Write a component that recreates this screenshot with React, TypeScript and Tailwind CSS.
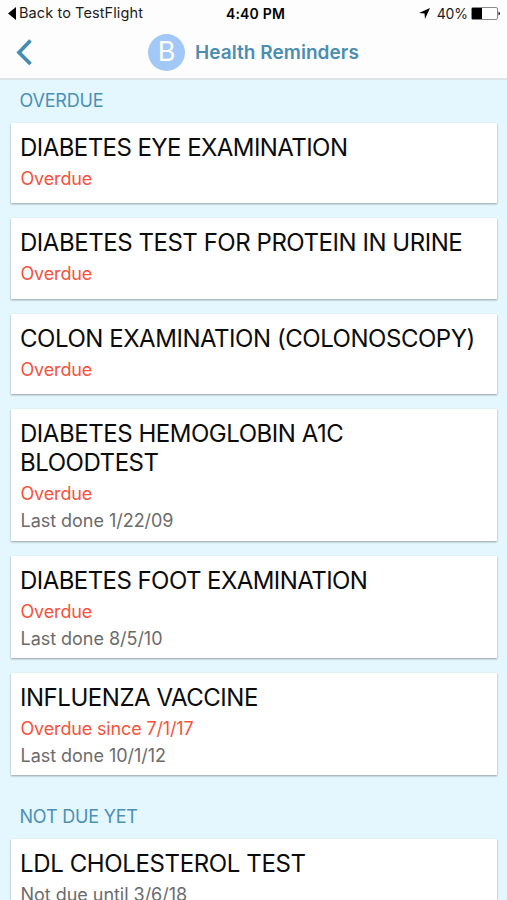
type Reminder = { title: string; status?: string; note?: string; size: string; tracking?: string };

const overdue: Reminder[] = [
  { title: 'DIABETES EYE EXAMINATION', status: 'Overdue', size: 'h-[80.4px]', tracking: 'tracking-[-0.56px]' },
  { title: 'DIABETES TEST FOR PROTEIN IN URINE', status: 'Overdue', size: 'h-[80.4px]' },
  { title: 'COLON EXAMINATION (COLONOSCOPY)', status: 'Overdue', size: 'h-[80.4px]' },
  { title: 'DIABETES HEMOGLOBIN A1C BLOODTEST', status: 'Overdue', note: 'Last done 1/22/09', size: 'h-[132px]' },
  { title: 'DIABETES FOOT EXAMINATION', status: 'Overdue', note: 'Last done 8/5/10', size: 'h-[102px]', tracking: 'tracking-[-0.56px]' },
  { title: 'INFLUENZA VACCINE', status: 'Overdue since 7/1/17', note: 'Last done 10/1/12', size: 'h-[102px]' },
];

function Card({ title, status, note, size, tracking = 'tracking-[-0.46px]' }: Reminder) {
  return (
    <article className={`${size} bg-white pl-[9.5px] pr-[16px] pt-[10px] shadow-[0_1px_2px_rgba(0,0,0,0.36)]`}>
      <h3 className={`-ml-[0.5px] mb-[2.6px] text-[24px] leading-[29.2px] text-[#0c0c0c] ${tracking}`}>{title}</h3>
      {status && <p className="text-[18px] leading-[27px] tracking-[-0.15px] text-[#f5533b]">{status}</p>}
      {note && <p className="text-[18px] leading-[27px] tracking-[-0.03px] text-[#6b6b6b]">{note}</p>}
    </article>
  );
}

export default function App() {
  return (
    <div className="h-[900px] w-[507px] overflow-hidden bg-[#e4f6fe] font-['Inter',sans-serif]">
      <header className="h-[80px] border-b-2 border-[#dfe4e7] bg-[#fdfdfd]">
        <div className="grid h-[26px] grid-cols-[1fr_auto_1fr] items-center pl-[8px] pr-[6px] text-[14px] text-[#1c1c1c]">
          <div className="flex items-center gap-[3px]">
            <svg width="8" height="13" viewBox="0 0 8 13"><path d="M8 0v13L0 6.500z" fill="#000" /></svg>
            <span className="text-[14.5px] tracking-[0.1px]">Back to TestFlight</span>
          </div>
          <span className="pl-[2px] text-[14px] font-semibold tracking-[0.2px] text-black">4:40 PM</span>
          <div className="flex items-center justify-end">
            <svg width="11" height="11" viewBox="0 0 11 11"><path d="M11 0 6 11 5.500 5.500 0 5z" fill="#000" /></svg>
            <span className="ml-[7px] tracking-[-0.1px]">40%</span>
            <svg className="ml-[3px]" width="30" height="13" viewBox="0 0 30 13">
              <rect x=".5" y=".5" width="26" height="12" rx="1.500" fill="none" stroke="#8a8a8a" />
              <path d="M1 1h10v11H1zM27.500 4.500q3 2 0 4z" fill="#000" />
            </svg>
          </div>
        </div>
        <div className="flex h-[52px] items-center pl-[16px]">
          <svg width="17" height="26" viewBox="0 0 17 26"><path d="M14.500 1.500 3 13.500l11.500 11.500" fill="none" stroke="#458cb2" strokeWidth="3.700" /></svg>
          <div className="ml-[115px] flex size-[37px] items-center justify-center rounded-full bg-[#a2c8f8] text-[27px] text-white">B</div>
          <h1 className="ml-[10px] pt-[2px] text-[19px] font-semibold tracking-[0.05px] text-[#4b8db1]">Health Reminders</h1>
        </div>
      </header>
      <main className="pl-[11px] pr-[10px]">
        <h2 className="flex h-[43px] items-center pl-[8.5px] pb-[2px] text-[18px] tracking-[-0.2px] text-[#4b90b7]">OVERDUE</h2>
        <div className="flex flex-col gap-[15px]">
          {overdue.map((r) => <Card key={r.title} {...r} />)}
        </div>
        <h2 className="mt-[19px] flex h-[45px] items-center pl-[8.5px] pb-[1px] text-[18px] tracking-[-0.2px] text-[#4b90b7]">NOT DUE YET</h2>
        <Card title="LDL CHOLESTEROL TEST" note="Not due until 3/6/18" size="h-[100px]" tracking="tracking-[-0.38px]" />
      </main>
    </div>
  );
}
